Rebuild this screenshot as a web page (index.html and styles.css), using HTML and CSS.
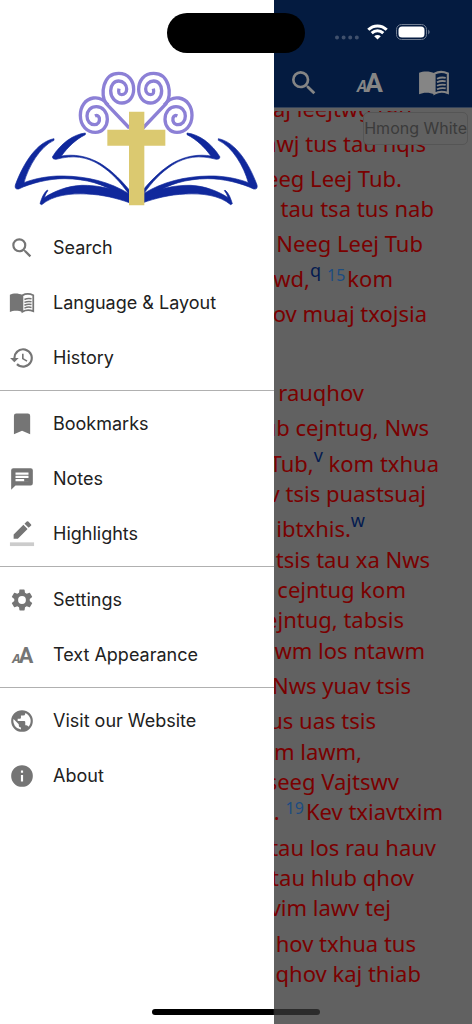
FILE: index.html
```html
<!DOCTYPE html>
<html lang="hmn">
<head>
<meta charset="utf-8">
<meta name="viewport" content="width=device-width, initial-scale=1">
<title>Bible reader</title>
<link rel="stylesheet" href="styles.css">
</head>
<body>
<svg class="defs" aria-hidden="true">
  <symbol id="search" viewBox="0 0 24 24"><path d="M15.5 14h-.79l-.28-.27A6.47 6.47 0 0 0 16 9.500 6.500 6.500 0 1 0 9.500 16c1.610 0 3.090-.59 4.230-1.570l.27.28v.79l5 4.990L20.490 19l-4.990-5zm-6 0a4.500 4.500 0 1 1 0-9 4.500 4.500 0 0 1 0 9z"/></symbol>
  <symbol id="book" viewBox="0 0 30 24"><path d="M1 2.500C5 .6 11 .6 15.500 2.900V22.700C11 20.500 5 20.500 1 22.500z"/><path d="M15.500 3.200C19 1.300 24 1.300 28 3V21.400C24 19.800 19 20 15.500 22z" fill="none" stroke="currentColor" stroke-width="2"/><path d="M17.800 8q4-1.800 8.200-.8M17.800 11.300q4-1.800 8.200-.8M17.800 14.600q4-1.800 8.200-.8M17.800 17.900q4-1.800 8.200-.8" fill="none" stroke="currentColor" stroke-width="1.700"/></symbol>
  <symbol id="history" viewBox="0 0 24 24"><path d="M13 3a9 9 0 0 0-9 9H1l3.890 3.890.07.14L9 12H6a7 7 0 1 1 2.060 4.940l-1.420 1.420A9 9 0 1 0 13 3zm-1 5v5l4.280 2.540.72-1.210-3.500-2.080V8z"/></symbol>
  <symbol id="bookmark" viewBox="0 0 24 24"><path d="M17 3H7a2 2 0 0 0-2 2v16l7-3 7 3V5a2 2 0 0 0-2-2z" transform="translate(-.8 -1) scale(1.070)"/></symbol>
  <symbol id="notes" viewBox="0 0 24 24"><path d="M20 2H4a2 2 0 0 0-2 2v18l4-4h14a2 2 0 0 0 2-2V4a2 2 0 0 0-2-2zm-2 12H6v-2h12zm0-3H6V9h12zm0-3H6V6h12z"/><path d="M14 11.500h5v3h-5z"/></symbol>
  <symbol id="highlight" viewBox="0 0 26 28"><path d="M4 14.500V19h4.500L19 8.500 14.500 4zM22.600 5.100a1.200 1.200 0 0 0 0-1.700L19.800.6a1.200 1.200 0 0 0-1.700 0L15.700 2.900l4.500 4.500z"/><path d="M0 23h26v4H0z" fill="#ccc"/></symbol>
  <symbol id="settings" viewBox="0 0 24 24"><path d="M19.140 12.940c.04-.3.060-.61.060-.94s-.02-.64-.07-.94l2.030-1.580a.49.49 0 0 0 .12-.61l-1.920-3.320a.49.49 0 0 0-.59-.22l-2.390.96a7 7 0 0 0-1.620-.94l-.36-2.540a.48.48 0 0 0-.48-.41h-3.840c-.24 0-.43.17-.47.41l-.36 2.540c-.59.24-1.130.57-1.620.94l-2.390-.96a.48.48 0 0 0-.59.22L2.740 8.870a.48.48 0 0 0 .12.61l2.030 1.580a6.600 6.600 0 0 0 0 1.880l-2.030 1.580a.49.49 0 0 0-.12.61l1.920 3.320c.12.22.37.29.59.22l2.390-.96c.5.38 1.030.7 1.620.94l.36 2.540c.05.24.24.41.48.41h3.840c.24 0 .44-.17.47-.41l.36-2.540c.59-.24 1.130-.56 1.620-.94l2.390.96c.22.08.47 0 .59-.22l1.920-3.320a.48.48 0 0 0-.12-.61zM12 15.600a3.600 3.600 0 1 1 0-7.200 3.600 3.600 0 0 1 0 7.200z"/></symbol>
  <symbol id="text" viewBox="0 0 24 24"><text x="3" y="19" class="glyph-small">A</text><text x="9" y="19" class="glyph-big">A</text></symbol>
  <symbol id="globe" viewBox="0 0 24 24"><path d="M12 2a10 10 0 1 0 0 20 10 10 0 0 0 0-20zm-1 17.930A8 8 0 0 1 4.210 10.210L9 15v1a2 2 0 0 0 2 2zm6.900-2.540A2 2 0 0 0 16 16h-1v-3a1 1 0 0 0-1-1H8v-2h2a1 1 0 0 0 1-1V7h2a2 2 0 0 0 2-2v-.41a8 8 0 0 1 2.900 12.800z"/></symbol>
  <symbol id="info" viewBox="0 0 24 24"><path d="M12 2a10 10 0 1 0 0 20 10 10 0 0 0 0-20zm1 15h-2v-6h2zm0-8h-2V7h2z"/></symbol>
</svg>

<div class="screen">
  <nav class="drawer" aria-label="Menu">
    <svg class="logo" viewBox="0 0 822 480" role="img" aria-label="Open book with a cross">
      <defs>
        <g id="half">
          <path class="swirl" d="M388 204L318 130C300 106 308 40 356 40C385 40 401 62 401 88C401 112 386 129 366 129C346 129 332 112 332 92C332 74 343 63 356 63C370 63 380 74 380 87C380 98 373 104 365 104C357 104 354 98 357 86"/>
          <path class="swirl" d="M324 134C308 114 292 112 280 114C255 118 241 140 241 166C241 198 262 217 286 217C308 217 322 198 322 178C322 156 308 140 289 140C272 140 261 153 261 168C261 184 271 194 283 194C295 194 300 184 298 174C296 167 291 165 285 168"/>
          <path class="page" d="M162 236C110 246 70 310 46 375Q43 389 56 387C90 370 150 355 195 356C260 357 310 372 355 402L388 424V402C330 365 260 349 190 348C150 347 105 355 72 368C85 320 120 260 162 241z"/>
          <path class="page" d="M256 219C220 223 182 250 157 291Q158 299 168 298C220 284 260 290 300 315C335 338 360 365 388 404V390C355 350 325 325 300 310C260 287 220 282 184 288C205 260 225 240 256 224z"/>
          <path class="gap" d="M355 402C320 384 280 374 240 372L200 367C260 362 310 374 355 402z"/>
          <path class="page" d="M142 390C130 400 125 415 120 431L125 434C160 405 210 400 260 402C310 404 350 415 388 428V408C340 385 290 375 245 376C200 378 160 395 133 413C136 403 140 396 144 392z"/>
        </g>
      </defs>
      <use href="#half"/>
      <use href="#half" transform="translate(817 0) scale(-1 1)"/>
      <path class="cross" d="M387 155H433V209H496V257H433V436H387V257H322V209H387z"/>
    </svg>
    <ul class="group">
      <li><a href="#"><svg><use href="#search"/></svg>Search</a></li>
      <li><a href="#"><svg><use href="#book"/></svg>Language &amp; Layout</a></li>
      <li><a href="#"><svg><use href="#history"/></svg>History</a></li>
    </ul>
    <ul class="group">
      <li><a href="#"><svg><use href="#bookmark"/></svg>Bookmarks</a></li>
      <li><a href="#"><svg><use href="#notes"/></svg>Notes</a></li>
      <li><a href="#"><svg><use href="#highlight"/></svg>Highlights</a></li>
    </ul>
    <ul class="group">
      <li><a href="#"><svg><use href="#settings"/></svg>Settings</a></li>
      <li><a href="#"><svg><use href="#text"/></svg>Text Appearance</a></li>
    </ul>
    <ul class="group">
      <li><a href="#"><svg><use href="#globe"/></svg>Visit our Website</a></li>
      <li><a href="#"><svg><use href="#info"/></svg>About</a></li>
    </ul>
  </nav>

  <div class="reader">
    <header class="bar">
      <div class="status">
        <svg class="dots" viewBox="0 0 24 16"><path d="M2 13.500h.01M8.600 13.500h.01M15.200 13.500h.01M21.800 13.500h.01"/></svg>
        <svg class="wifi" viewBox="0 0 21 16"><path d="M1.300 5.700C6.500.6 14.500.6 19.700 5.700M4.700 9.100c3.400-3.300 8.200-3.300 11.600 0"/><path class="solid" d="M10.500 15.600L7.200 12.300c1.900-1.800 4.700-1.800 6.600 0z"/></svg>
        <svg class="battery" viewBox="0 0 35 16"><rect class="case" x=".5" y=".5" width="30" height="15" rx="5"/><rect class="charge" x="2.500" y="2.500" width="26" height="11" rx="3.500"/><path class="tip" d="M32.200 5.500q3 2.500 0 5z"/></svg>
      </div>
      <div class="tools">
        <button aria-label="Search"><svg><use href="#search"/></svg></button>
        <button aria-label="Text appearance"><svg><use href="#text"/></svg></button>
        <button aria-label="Layout"><svg><use href="#book"/></svg></button>
      </div>
    </header>
    <main class="text">
      <span class="version">Hmong White</span>
      <div class="verse">
        <p class="tall" style="--end:60px">aj leejtwg rau</p>
        <p class="tall" style="--end:46px">awj tus tau nqis</p>
        <p class="tall" style="--end:70px">eeg Leej Tub.</p>
        <p style="--end:38px">tau tsa tus nab</p>
        <p class="tall" style="--end:49px">Neeg Leej Tub</p>
        <p class="tall" style="--end:79px">wd,<sup>q</sup> <b>15</b>kom</p>
        <p class="tall" style="--end:45px">ov muaj txojsia</p>
      </div>
      <div class="verse rest">
        <p class="tall" style="--end:108px">rauqhov</p>
        <p class="tall" style="--end:43px">ub cejntug, Nws</p>
        <p class="tall" style="--end:33px">Tub,<sup>v</sup> kom txhua</p>
        <p style="--end:46px">v tsis puastsuaj</p>
        <p class="tall" style="--end:107px">ibtxhis.<sup>w</sup></p>
        <p style="--end:42px">tsis tau xa Nws</p>
        <p style="--end:66px">cejntug kom</p>
        <p style="--end:68px">ejntug, tabsis</p>
        <p style="--end:47px">wm los ntawm</p>
        <p class="tall" style="--end:61px">Nws yuav tsis</p>
        <p class="tall" style="--end:96px">us uas tsis</p>
        <p style="--end:110px">m lawm,</p>
        <p style="--end:73px">seeg Vajtswv</p>
        <p style="--end:29px">.<b>19</b>Kev txiavtxim</p>
        <p class="tall" style="--end:36px">tau los rau hauv</p>
        <p style="--end:58px">tau hlub qhov</p>
        <p style="--end:81px">vim lawv tej</p>
        <p class="tall" style="--end:56px">hov txhua tus</p>
        <p style="--end:51px">qhov kaj thiab</p>
      </div>
    </main>
  </div>
  <div class="island"></div>
  <div class="home"></div>
</div>
</body>
</html>
```
FILE: styles.css
```css
* { box-sizing: border-box; }
body { margin: 0; font-family: Inter, Roboto, sans-serif; }
.defs { position: absolute; width: 0; height: 0; }
.screen { position: relative; display: flex; min-height: 100vh; overflow: hidden; }

.drawer { flex: 0 0 274px; background: #fff; padding-top: 60px; color: #212121; }
.logo { display: block; width: 100%; height: 160px; }
.swirl { fill: none; stroke: #8c80d6; stroke-width: 10; }
.page { fill: #10289c; stroke: #10289c; stroke-width: 2; }
.gap { fill: #fff; }
.cross { fill: #dbc970; }
.group { list-style: none; margin: 0; padding: 5px 0; border-top: 1px solid #b0b0b0; }
.logo + .group { border-top: 0; padding-top: 0; }
.group a { display: flex; align-items: center; gap: 18px; height: 55px; padding-left: 9px; color: inherit; font-size: 18px; text-decoration: none; }
.group svg { flex: none; width: 26px; height: 26px; color: #757575; fill: currentColor; }
.glyph-small { font: italic 700 12px "Open Sans", sans-serif; }
.glyph-big { font: 700 20px Roboto, sans-serif; }

.reader { flex: 1; min-width: 0; display: flex; flex-direction: column; background: #616161; }
.bar { background: #041b40; padding-top: 24px; height: 108px; border-bottom: 1px solid #34435a; }
.status { display: flex; justify-content: flex-end; gap: 8px; padding-right: 41px; height: 16px; }
.dots { width: 24px; height: 16px; fill: none; stroke: #40506c; stroke-width: 4; stroke-linecap: round; }
.wifi { width: 21px; height: 16px; fill: none; stroke: #fff; stroke-width: 3; }
.wifi .solid { fill: #fff; stroke: none; }
.battery { width: 35px; height: 16px; }
.case { fill: none; stroke: #707d92; }
.charge { fill: #fff; }
.tip { fill: #707d92; }
.tools { display: flex; justify-content: space-between; padding: 27px 22px 0 14px; }
.tools button { display: flex; padding: 0; border: 0; background: none; color: #858585; }
.tools svg { width: 32px; height: 32px; fill: currentColor; }

.text { position: relative; flex: 1; display: flex; flex-direction: column; gap: 44px; margin-top: 3px; padding-bottom: 36px; color: #7a0000; font: 22px "Noto Sans", sans-serif; }
.verse { display: flex; flex-direction: column; overflow: hidden; }
.verse:first-of-type { justify-content: flex-end; height: 217px; }
.rest { flex: 1; justify-content: space-between; }
.verse p { flex: none; display: flex; justify-content: flex-end; align-items: flex-end; height: 30px; margin: 0; padding-right: var(--end); line-height: 30px; white-space: pre; }
.verse .tall { height: 35px; }
sup { align-self: flex-start; font-size: 18px; line-height: 24px; color: #041b50; }
.verse b { padding: 0 2px 0 6px; font-size: 16px; font-weight: 400; line-height: 36px; color: #1c4c80; }
.version { position: absolute; top: 1px; right: 4px; height: 33px; border: 1px solid #555; border-radius: 5px; background: #616161; color: #3b3b3b; font: 16px/31px Inter, sans-serif; white-space: nowrap; }

.island { position: absolute; left: 167px; top: 13px; width: 138px; height: 40px; border-radius: 20px; background: #000; }
.home { position: absolute; left: 152px; bottom: 9px; width: 168px; height: 6px; border-radius: 3px; background: linear-gradient(90deg, #000 72%, #2b2b2b 73%); }
```
